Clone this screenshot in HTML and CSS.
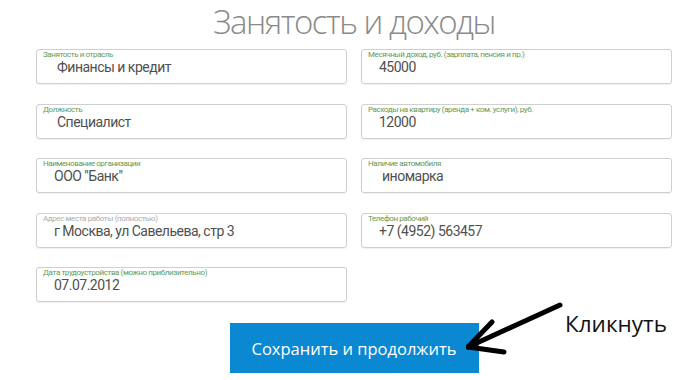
FILE: index.html
```html
<!DOCTYPE html>
<html lang="ru">
<head>
    <meta charset="UTF-8">
    <title>Занятость и доходы</title>
    <link rel="stylesheet" href="styles.css">
</head>
<body>
    <div class="page">
        <h1 class="title">Занятость и доходы</h1>
        <div class="form">
            <div class="field">
                <span class="label">Занятость и отрасль</span>
                <span class="value shift">Финансы и кредит</span>
            </div>
            <div class="field">
                <span class="label">Месячный доход, руб. (зарплата, пенсия и пр.)</span>
                <span class="value">45000</span>
            </div>
            <div class="field">
                <span class="label">Должность</span>
                <span class="value shift">Специалист</span>
            </div>
            <div class="field">
                <span class="label">Расходы на квартиру (аренда + ком. услуги), руб.</span>
                <span class="value">12000</span>
            </div>
            <div class="field">
                <span class="label">Наименование организации</span>
                <span class="value">ООО "Банк"</span>
            </div>
            <div class="field">
                <span class="label">Наличие автомобиля</span>
                <span class="value shift">иномарка</span>
            </div>
            <div class="field">
                <span class="label muted">Адрес места работы (полностью)</span>
                <span class="value">г Москва, ул Савельева, стр 3</span>
            </div>
            <div class="field">
                <span class="label">Телефон рабочий</span>
                <span class="value">+7 (4952) 563457</span>
            </div>
            <div class="field">
                <span class="label">Дата трудоустройства (можно приблизительно)</span>
                <span class="value">07.07.2012</span>
            </div>
        </div>
        <div class="actions">
            <button class="btn">Сохранить и продолжить</button>
        </div>
    </div>

    <!-- пометка поверх скриншота -->
    <svg class="arrow" width="100" height="60" viewBox="0 0 100 60">
        <g stroke="#000" stroke-width="5" stroke-linecap="round" fill="none">
            <line x1="94" y1="3" x2="2" y2="45"/>
            <line x1="2" y1="45" x2="26" y2="20"/>
            <line x1="2" y1="45" x2="38" y2="50"/>
        </g>
    </svg>
    <div class="note">Кликнуть</div>
</body>
</html>
```
FILE: styles.css
```css
*{
    margin: 0;
    padding: 0;
    box-sizing: border-box;
}
body {
    background-color: #fff;
    font-family: Roboto, "Liberation Sans", sans-serif;
}
.page {
    width: 636px;
    margin-left: 36px;
}
.title {
    margin-bottom: 6px;
    font-family: "Open Sans", sans-serif;
    font-weight: 300;
    font-size: 33px;
    line-height: 43px;
    letter-spacing: -1.5px;
    color: #8a8a8a;
    text-align: center;
}
.form {
    display: grid;
    grid-template-columns: 311px 311px;
    column-gap: 14px;
    row-gap: 19.5px;
}
.field {
    display: flex;
    flex-direction: column;
    height: 35px;
    border: 1px solid #cfcfcf;
    border-radius: 3px;
    box-shadow: 0 1px 1px rgba(0,0,0,0.06);
}
.label {
    padding-left: 6px;
    font-size: 8px;
    line-height: 9px;
    letter-spacing: -0.4px;
    color: #5f9a55;
    white-space: nowrap;
}
.label.muted {
    color: #a9b0a9;
}
.value {
    padding-left: 17px;
    font-size: 14px;
    line-height: 16px;
    letter-spacing: -0.5px;
    color: #505050;
}
.value.shift {
    padding-left: 20px;
}
.actions {
    display: flex;
    justify-content: center;
    margin-top: 21px;
}
.btn {
    width: 249px;
    height: 50px;
    border: none;
    background-color: #0b88d2;
    color: #fff;
    font-family: "Open Sans", sans-serif;
    font-size: 16.5px;
}
.arrow {
    position: absolute;
    left: 466px;
    top: 302px;
}
.note {
    position: absolute;
    left: 565px;
    top: 309px;
    font-family: "Open Sans", sans-serif;
    font-size: 22.5px;
    line-height: 30px;
    color: #111;
}
```
